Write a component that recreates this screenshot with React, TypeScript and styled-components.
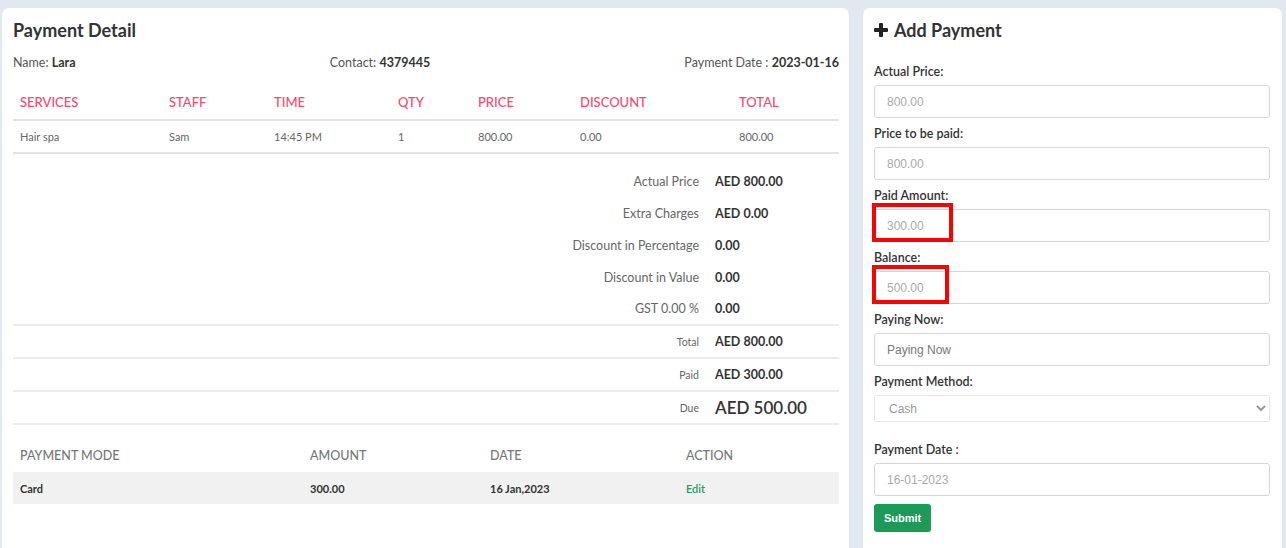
import React from 'react';
import styled, { createGlobalStyle } from 'styled-components';

const GlobalStyle = createGlobalStyle`
    * { box-sizing: border-box; }
    body {
        margin: 0;
        background: #e2e8f0;
        font-family: Lato, "Open Sans", sans-serif;
        color: #333;
        overflow: hidden;
    }
`;

const services = [
    { name: 'Hair spa', staff: 'Sam', time: '14:45 PM', qty: '1', price: '800.00', discount: '0.00', total: '800.00' },
];

const serviceCols = [
    { label: 'SERVICES', w: 149 },
    { label: 'STAFF', w: 105 },
    { label: 'TIME', w: 124 },
    { label: 'QTY', w: 80 },
    { label: 'PRICE', w: 102 },
    { label: 'DISCOUNT', w: 159 },
    { label: 'TOTAL', w: 107 },
];

const summary = [
    { label: 'Actual Price', value: 'AED 800.00' },
    { label: 'Extra Charges', value: 'AED 0.00' },
    { label: 'Discount in Percentage', value: '0.00' },
    { label: 'Discount in Value', value: '0.00' },
    { label: 'GST 0.00 %', value: '0.00' },
];

const totals = [
    { label: 'Total', value: 'AED 800.00' },
    { label: 'Paid', value: 'AED 300.00' },
    { label: 'Due', value: 'AED 500.00', big: true },
];

const payCols = [
    { label: 'PAYMENT MODE', w: 290 },
    { label: 'AMOUNT', w: 180 },
    { label: 'DATE', w: 196 },
    { label: 'ACTION', w: 160 },
];

const PlusIcon = () => (
    <svg width="14" height="14" viewBox="0 0 14 14">
        <rect x="5" y="0" width="4" height="14" rx="1" fill="#222" />
        <rect x="0" y="5" width="14" height="4" rx="1" fill="#222" />
    </svg>
);

const App = () => {
    return (
        <>
            <GlobalStyle />
            <Page>
                <Card>
                    <Title>Payment Detail</Title>
                    <InfoRow>
                        <span>Name: <b>Lara</b></span>
                        <span>Contact: <b>4379445</b></span>
                        <span>Payment Date : <b>2023-01-16</b></span>
                    </InfoRow>
                    <Table>
                        <thead>
                            <tr>
                                {serviceCols.map((c) => (
                                    <Th key={c.label} $w={c.w}>{c.label}</Th>
                                ))}
                            </tr>
                        </thead>
                        <tbody>
                            {services.map((s) => (
                                <tr key={s.name}>
                                    <Td>{s.name}</Td>
                                    <Td>{s.staff}</Td>
                                    <Td>{s.time}</Td>
                                    <Td>{s.qty}</Td>
                                    <Td>{s.price}</Td>
                                    <Td>{s.discount}</Td>
                                    <Td>{s.total}</Td>
                                </tr>
                            ))}
                        </tbody>
                    </Table>

                    <SummaryTable>
                        <tbody>
                            {summary.map((r) => (
                                <tr key={r.label}>
                                    <SumLabel>{r.label}</SumLabel>
                                    <SumValue>{r.value}</SumValue>
                                </tr>
                            ))}
                            {totals.map((r) => (
                                <LinedRow key={r.label}>
                                    <SumLabel $small>{r.label}</SumLabel>
                                    <SumValue $big={r.big}>{r.value}</SumValue>
                                </LinedRow>
                            ))}
                        </tbody>
                    </SummaryTable>

                    <PayTable>
                        <thead>
                            <tr>
                                {payCols.map((c) => (
                                    <PayTh key={c.label} $w={c.w}>{c.label}</PayTh>
                                ))}
                            </tr>
                        </thead>
                        <tbody>
                            <PayRow>
                                <PayTd>Card</PayTd>
                                <PayTd>300.00</PayTd>
                                <PayTd>16 Jan,2023</PayTd>
                                <PayTd><EditLink>Edit</EditLink></PayTd>
                            </PayRow>
                        </tbody>
                    </PayTable>
                </Card>

                <SideCard>
                    <Title>
                        <PlusIcon />
                        <span>Add Payment</span>
                    </Title>
                    <Form>
                        <Group>
                            <Label>Actual Price:</Label>
                            <Input placeholder="800.00" />
                        </Group>
                        <Group>
                            <Label>Price to be paid:</Label>
                            <Input placeholder="800.00" />
                        </Group>
                        <Group>
                            <Label>Paid Amount:</Label>
                            <Field>
                                <Input placeholder="300.00" />
                                <Highlight $w={81} />
                            </Field>
                        </Group>
                        <Group>
                            <Label>Balance:</Label>
                            <Field>
                                <Input placeholder="500.00" />
                                <Highlight $w={77} />
                            </Field>
                        </Group>
                        <Group>
                            <Label>Paying Now:</Label>
                            <Input placeholder="Paying Now" $dark />
                        </Group>
                        <Group $wide>
                            <Label>Payment Method:</Label>
                            <Select defaultValue="cash">
                                <option value="cash">Cash</option>
                                <option value="card">Card</option>
                            </Select>
                        </Group>
                        <Group>
                            <Label>Payment Date :</Label>
                            <Input placeholder="16-01-2023" />
                        </Group>
                        <SubmitButton>Submit</SubmitButton>
                    </Form>
                </SideCard>
            </Page>
        </>
    );
};

export default App;

const Page = styled.div`
    display: grid;
    grid-template-columns: 847px 419px;
    gap: 14px;
    padding: 8px 0 0 2px;
    height: 100vh;
`;

const Card = styled.div`
    background: #fff;
    border-radius: 7px;
    padding: 10px 10px 0 11px;
    height: calc(100vh - 8px + 20px);
`;

const SideCard = styled(Card)`
    padding: 10px 12px 0 11px;
`;

const Title = styled.h2`
    margin: 0;
    font-size: 18px;
    line-height: 24px;
    font-weight: 700;
    color: #333;
    display: flex;
    align-items: center;
    gap: 6px;
`;

const InfoRow = styled.div`
    display: flex;
    justify-content: space-between;
    margin-top: 12px;
    font-size: 12.5px;
    line-height: 18px;
    color: #555;

    b {
        color: #333;
        font-weight: 700;
    }
`;

const Table = styled.table`
    width: 100%;
    border-collapse: collapse;
    table-layout: fixed;
    margin-top: 12px;
`;

const Th = styled.th<{ $w: number }>`
    width: ${(p) => p.$w}px;
    text-align: left;
    color: #f44a6c;
    font-weight: 500;
    font-size: 13px;
    line-height: 16px;
    padding: 10px 7px 9px;
    border-bottom: 2px solid #e4e4e4;
`;

const Td = styled.td`
    font-size: 11px;
    color: #666;
    padding: 8px 7px 7px;
    line-height: 16px;
    border-bottom: 2px solid #e4e4e4;
`;

const SummaryTable = styled.table`
    width: 100%;
    border-collapse: collapse;
    margin-top: 11px;
`;

const LinedRow = styled.tr`
    border-top: 2px solid #ececec;

    td {
        height: 33px;
    }

    &:last-child {
        border-bottom: 2px solid #ececec;
    }
`;

const SumLabel = styled.td<{ $small?: boolean }>`
    text-align: right;
    height: 32px;
    padding: 0 8px 0 0;
    color: #666;
    font-size: ${(p) => (p.$small ? '10.5px' : '12.5px')};
`;

const SumValue = styled.td<{ $big?: boolean }>`
    width: 132px;
    height: 32px;
    padding: 0 0 0 8px;
    color: #333;
    font-weight: ${(p) => (p.$big ? 600 : 700)};
    font-size: ${(p) => (p.$big ? '17px' : '12.5px')};
`;

const PayTable = styled.table`
    width: 100%;
    border-collapse: collapse;
    table-layout: fixed;
    margin-top: 14px;
`;

const PayTh = styled.th<{ $w: number }>`
    width: ${(p) => p.$w}px;
    text-align: left;
    font-weight: 500;
    font-size: 12.5px;
    color: #777;
    padding: 0 7px;
    height: 33px;
`;

const PayRow = styled.tr`
    background: #f1f1f1;
`;

const PayTd = styled.td`
    font-size: 11px;
    font-weight: 700;
    color: #333;
    padding: 0 7px;
    height: 32px;
`;

const EditLink = styled.a`
    color: #2e9a5e;
    font-weight: 600;
    cursor: pointer;
`;

const Form = styled.div`
    display: flex;
    flex-direction: column;
    align-items: flex-start;
    margin-top: 22px;
`;

const Group = styled.div<{ $wide?: boolean }>`
    display: flex;
    flex-direction: column;
    gap: 5px;
    width: 100%;
    margin-bottom: ${(p) => (p.$wide ? '20px' : '8px')};
`;

const Label = styled.label`
    font-size: 12.5px;
    line-height: 16px;
    font-weight: 600;
    color: #333;
`;

const Field = styled.div`
    position: relative;
`;

const Highlight = styled.div<{ $w: number }>`
    position: absolute;
    top: -6px;
    left: -2px;
    width: ${(p) => p.$w}px;
    height: 39px;
    border: 4px solid #ff0000;
    pointer-events: none;
`;

const Input = styled.input<{ $dark?: boolean }>`
    width: 100%;
    height: 33px;
    padding: 0 12px;
    border: 1px solid #d4d4d4;
    border-radius: 3px;
    font-family: "Liberation Sans", Arial, sans-serif;
    font-size: 12px;
    color: #333;
    outline: none;

    &::placeholder {
        color: ${(p) => (p.$dark ? '#777' : '#aaa')};
    }
`;

const Select = styled.select`
    width: 100%;
    height: 27px;
    padding: 0 10px;
    border: 1px solid #e6e6e6;
    border-radius: 3px;
    background: #fff;
    font-family: "Liberation Sans", Arial, sans-serif;
    font-size: 12px;
    color: #999;
    outline: none;
`;

const SubmitButton = styled.button`
    background: #1c9b58;
    color: #fff;
    border: none;
    border-radius: 3px;
    height: 28px;
    padding: 0 10px;
    font-family: "Liberation Sans", Arial, sans-serif;
    font-size: 11px;
    font-weight: 700;
    cursor: pointer;
`;
